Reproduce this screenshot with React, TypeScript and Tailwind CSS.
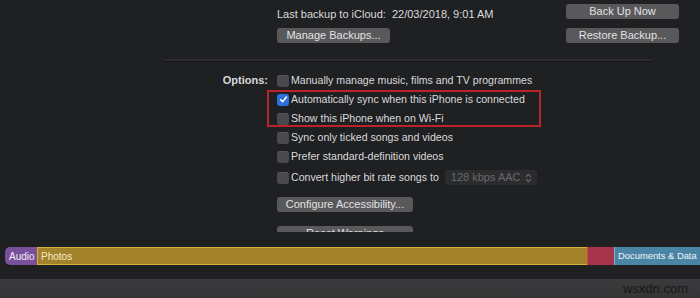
import React from 'react';

const font = { fontFamily: '"Liberation Sans", Arial, sans-serif' };

const Checkbox: React.FC<{ checked?: boolean }> = ({ checked }) =>
  checked ? (
    <span className="flex h-[12px] w-[12px] shrink-0 items-center justify-center rounded-[3px] bg-[#2d6fdf]">
      <svg width="9" height="9" viewBox="0 0 10 10">
        <path d="M1.8 5.2 L4 7.4 L8.3 2.2" fill="none" stroke="#fff" strokeWidth="1.7" strokeLinecap="round" strokeLinejoin="round" />
      </svg>
    </span>
  ) : (
    <span className="h-[12px] w-[12px] shrink-0 rounded-[3px] bg-[#4a4a4d] shadow-[inset_0_1px_0_rgba(255,255,255,0.08)]" />
  );

const Option: React.FC<{ label: string; checked?: boolean }> = ({ label, checked }) => (
  <div className="flex h-[19px] items-center gap-[2px]">
    <Checkbox checked={checked} />
    <span className="text-[10.6px] text-[#dadadc]">{label}</span>
  </div>
);

const Button: React.FC<{ label: string; width: string }> = ({ label, width }) => (
  <div className={`flex h-[15px] items-center justify-center overflow-hidden whitespace-nowrap rounded-[3px] bg-[#59595b] text-[11px] text-[#e2e2e4] ${width}`}>
    {label}
  </div>
);

const App: React.FC = () => {
  return (
    <div className="flex h-[298px] w-[700px] flex-col overflow-hidden bg-[#1f2022]" style={font}>
      {/* scrolling settings area */}
      <div className="h-[232px] shrink-0 overflow-hidden pt-[4px]">
        <div className="flex h-[15px] items-center">
          <div className="flex-1 pl-[277px] pt-[5px] text-[11px] text-[#dadadc]">Last backup to iCloud:&nbsp; 22/03/2018, 9:01 AM</div>
          <div className="mr-[21px] w-[113px]">
            <Button label="Back Up Now" width="w-[113px]" />
          </div>
        </div>
        <div className="mt-[9px] flex h-[15px] items-center">
          <div className="flex-1 pl-[277px]">
            <Button label="Manage Backups..." width="w-[113px]" />
          </div>
          <div className="mr-[21px] w-[113px]">
            <Button label="Restore Backup..." width="w-[113px]" />
          </div>
        </div>

        <div className="ml-[163px] mt-[16px] h-[2px] w-[490px] rounded-full bg-[#2b2c2f] shadow-[0_1px_0_rgba(0,0,0,0.35)]" />

        <div className="mt-[10px] grid grid-cols-[268px_1fr] gap-x-[9px]">
          <div className="flex h-[19px] items-center justify-end text-[11px] font-bold text-[#dadadc]">Options:</div>
          <div className="flex flex-col">
            <Option label="Manually manage music, films and TV programmes" />
            <div className="relative">
              <Option label="Automatically sync when this iPhone is connected" checked />
              <Option label="Show this iPhone when on Wi-Fi" />
              <span className="pointer-events-none absolute -left-[10px] top-[0px] h-[37px] w-[274px] border-2 border-[#b8242a]" />
            </div>
            <Option label="Sync only ticked songs and videos" />
            <Option label="Prefer standard-definition videos" />
            <div className="mt-[2px] flex h-[19px] items-center gap-[2px]">
              <Checkbox />
              <span className="text-[10.6px] text-[#dadadc]">Convert higher bit rate songs to</span>
              <div className="ml-[4px] flex h-[15px] w-[92px] items-center justify-between rounded-[3px] bg-[#2b2c2e] pl-[6px] pr-[5px] text-[11px] text-[#69696c]">
                <span>128 kbps AAC</span>
                <svg width="7" height="10" viewBox="0 0 7 10">
                  <path d="M1 3.8 L3.5 1.3 L6 3.8 M1 6.2 L3.5 8.7 L6 6.2" fill="none" stroke="#6c6c6f" strokeWidth="1.1" />
                </svg>
              </div>
            </div>
            <div className="mt-[10px]">
              <Button label="Configure Accessibility..." width="w-[136px]" />
            </div>
            <div className="mt-[14px]">
              <Button label="Reset Warnings" width="w-[136px]" />
            </div>
          </div>
        </div>
      </div>

      {/* storage bar */}
      <div className="mt-[15px] flex h-[18px] shrink-0 whitespace-nowrap pl-[5px] text-[10px] text-[#f1eef4]">
        <div className="flex w-[32px] items-center rounded-l-[5px] bg-[#7a4f9b] pl-[4px]">Audio</div>
        <div className="flex w-[550px] items-center border-y border-l border-[#d6b23c] bg-[#a2822b] pl-[3px] text-[#f6ecc8]">Photos</div>
        <div className="w-[27px] border-l border-[#c0543f] bg-[#a6344c]" />
        <div className="flex flex-1 items-center border-l border-[#7eb5d2] bg-[#4b85a6] pl-[3px] text-[9.4px] text-[#eef4f8]">Documents &amp; Data</div>
      </div>

      <div className="mt-[14px] flex flex-1 items-center justify-end bg-gradient-to-b from-[#3b3b3d] to-[#353537] pr-[12px]">
        <span className="text-[13px] text-[#161616]">wsxdn.com</span>
      </div>
    </div>
  );
};

export default App;
